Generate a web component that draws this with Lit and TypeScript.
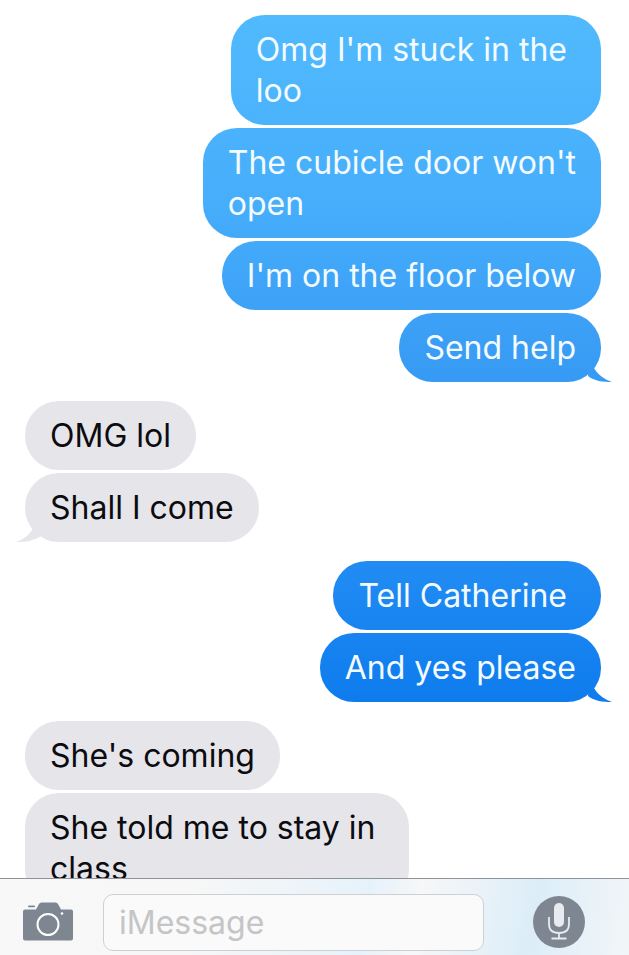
import { LitElement, html, css, svg } from "lit";
import { customElement } from "lit/decorators.js";

type Msg = { text: string; me: boolean; tail?: boolean; gap?: number };

const MESSAGES: Msg[] = [
  { text: "Omg I'm stuck in the \nloo", me: true },
  { text: "The cubicle door won't\nopen", me: true },
  { text: "I'm on the floor below", me: true },
  { text: "Send help", me: true, tail: true },
  { text: "OMG lol", me: false, gap: 19 },
  { text: "Shall I come", me: false, tail: true },
  { text: "Tell Catherine ", me: true, gap: 19 },
  { text: "And yes please", me: true, tail: true },
  { text: "She's coming", me: false, gap: 19 },
  { text: "She told me to stay in \nclass", me: false },
];

@customElement("app-root")
export class AppRoot extends LitElement {
  static styles = css`
    :host {
      display: block;
      width: 629px;
      height: 955px;
      overflow: hidden;
      background: #fff;
      font-family: "Inter", "Liberation Sans", sans-serif;
    }
    .thread {
      height: 878px;
      box-sizing: border-box;
      padding: 15px 28px 0 25px;
      display: flex;
      flex-direction: column;
      gap: 3px;
      overflow: hidden;
    }
    .bubble {
      position: relative;
      flex: none;
      box-sizing: border-box;
      padding: 14px 25px;
      border-radius: 34px;
      font-size: 32px;
      line-height: 41px;
      white-space: pre;
    }
    .me {
      align-self: flex-end;
      color: #f4fbff;
      background: linear-gradient(180deg, #52bbfe 0px, #46aefb 200px, #3a9df5 350px, #1f8af2 580px, #0f7cee 700px) fixed;
    }
    .them {
      align-self: flex-start;
      color: #0c0c10;
      background: #e5e5ea;
    }
    .tail::after {
      content: "";
      position: absolute;
      bottom: 0;
      width: 28px;
      height: 26px;
      background: inherit;
    }
    .me.tail::after {
      right: -11px;
      clip-path: path("M6 0 C8 12 14 21 28 26 C19 26 10 25 4 20 Z");
    }
    .them.tail::after {
      left: -10px;
      clip-path: path("M22 0 C20 12 14 22 1 26 C10 26 19 25 26 20 Z");
    }
    .composer {
      height: 77px;
      box-sizing: border-box;
      border-top: 1px solid #8f9296;
      padding: 15px 44px 5px 22px;
      display: flex;
      align-items: center;
      background: linear-gradient(100deg, #f8f8f8 0%, #f7f7f7 30%, #e6f2fa 58%, #f6f7f8 66%, #dcedf8 84%, #f2f6f8 100%);
    }
    .camera {
      flex: none;
      width: 52px;
      height: 40px;
      display: block;
    }
    .field {
      flex: none;
      width: 381px;
      height: 57px;
      margin-left: 29px;
      box-sizing: border-box;
      border: 1px solid #cdd0d3;
      border-radius: 10px;
      background: #fafafa;
      padding: 0 0 0 15px;
      display: flex;
      align-items: center;
      font-size: 32px;
      color: #c4c5c7;
    }
    .mic {
      flex: none;
      width: 52px;
      height: 52px;
      margin-left: 49px;
      display: block;
    }
  `;

  private cameraIcon() {
    return html`<svg class="camera" viewBox="0 0 52 40" aria-hidden="true">
      <path fill="#7e8791" d="M1 9.500q0-2 2-2H14L17 2q.8-1.500 2.500-1.500h14q1.700 0 2.500 1.500L39 7.500h10q2 0 2 2V36.500q0 2-2 2H3q-2 0-2-2Z" />
      <rect x="6" y="3.500" width="7" height="1.800" rx="0.900" fill="#7e8791" />
      <circle cx="26" cy="22.500" r="10.500" fill="none" stroke="#fff" stroke-width="2" />
      <circle cx="40" cy="11.500" r="1.300" fill="#fff" />
    </svg>`;
  }

  private micIcon() {
    return html`<svg class="mic" viewBox="0 0 52 52" aria-hidden="true">
      <circle cx="26" cy="26" r="26" fill="#7e8791" />
      ${svg`<rect x="21" y="7" width="10" height="24" rx="5" fill="#e8ecf0" />
      <path d="M16 21v7q0 9 10 9t10-9v-7M26 37v5M18.500 42.500h15" fill="none" stroke="#e8ecf0" stroke-width="1.800" />`}
    </svg>`;
  }

  render() {
    return html`
      <div class="thread">
        ${MESSAGES.map(
          (m) => html`<div
            class="bubble ${m.me ? "me" : "them"} ${m.tail ? "tail" : ""}"
            style=${m.gap ? `margin-top:${m.gap - 3}px` : ""}
          >${m.text}</div>`
        )}
      </div>
      <div class="composer">
        ${this.cameraIcon()}
        <div class="field">iMessage</div>
        ${this.micIcon()}
      </div>
    `;
  }
}
